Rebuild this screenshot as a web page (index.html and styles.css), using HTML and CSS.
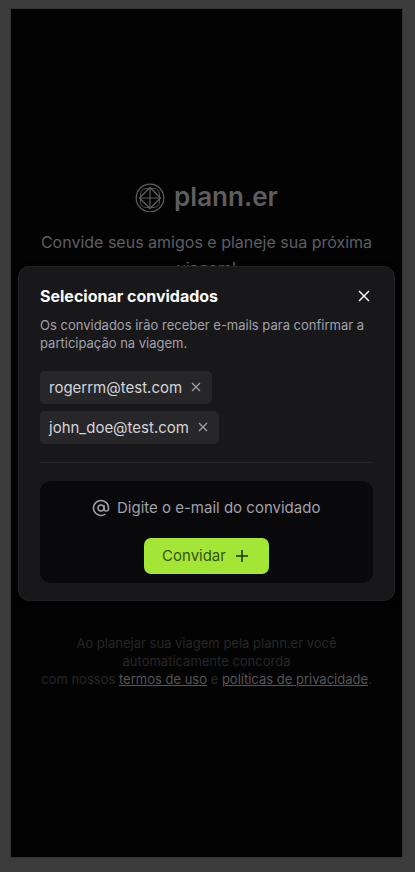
FILE: index.html
```html
<!DOCTYPE html>
<html lang="pt-BR">
<head>
<meta charset="utf-8">
<meta name="viewport" content="width=device-width, initial-scale=1">
<title>plann.er</title>
<link rel="stylesheet" href="styles.css">
</head>
<body>
<div class="screen">
  <main class="home">
    <header class="hero">
      <h1 class="brand">
        <svg class="brand-mark" viewBox="0 0 30 30" fill="none" stroke="currentColor" aria-hidden="true">
          <circle cx="15" cy="16" r="13.800" stroke-width="1.2"/>
          <path d="M15 5.500 25.500 16 15 26.500 4.500 16Z" stroke-width="1.4"/>
          <path d="M15 5.500v21M4.500 16h21" stroke-width="1.2"/>
          <rect x="5.500" y="6.500" width="19" height="19" rx="5.500" stroke-width=".8"/>
        </svg>
        <span>plann.er</span>
      </h1>
      <p class="tagline">Convide seus amigos e planeje sua próxima viagem!</p>
    </header>
    <p class="terms">Ao planejar sua viagem pela plann.er você automaticamente concorda<br>com nossos <a href="#">termos de uso</a> e <a href="#">políticas de privacidade</a>.</p>
  </main>

  <div class="overlay">
    <section class="dialog" role="dialog" aria-labelledby="dialog-title">
      <div class="dialog-head">
        <h2 id="dialog-title">Selecionar convidados</h2>
        <button class="icon-button close" type="button" aria-label="Fechar">
          <svg viewBox="0 0 18 18" aria-hidden="true"><path d="M4 4l10 10M14 4L4 14"/></svg>
        </button>
      </div>
      <p class="description">Os convidados irão receber e-mails para confirmar a participação na viagem.</p>
      <ul class="guests">
        <li class="guest"><span>rogerrm@test.com</span>
          <button class="icon-button" type="button" aria-label="Remover">
            <svg viewBox="0 0 14 14" aria-hidden="true"><path d="M3 3l8 8M11 3l-8 8"/></svg>
          </button></li>
        <li class="guest"><span>john_doe@test.com</span>
          <button class="icon-button" type="button" aria-label="Remover">
            <svg viewBox="0 0 14 14" aria-hidden="true"><path d="M3 3l8 8M11 3l-8 8"/></svg>
          </button></li>
      </ul>
      <form class="invite">
        <div class="field">
          <svg viewBox="0 0 24 24" aria-hidden="true"><circle cx="12" cy="12" r="4"/><path d="M16 8v5a3 3 0 0 0 6 0v-1a10 10 0 1 0-4 8"/></svg>
          <input type="email" placeholder="Digite o e-mail do convidado" aria-label="E-mail do convidado">
        </div>
        <button class="submit" type="submit">Convidar
          <svg viewBox="0 0 24 24" aria-hidden="true"><path d="M4 12h16M12 4v16"/></svg>
        </button>
      </form>
    </section>
  </div>
</div>
</body>
</html>
```
FILE: styles.css
```css
* {
  box-sizing: border-box;
  margin: 0;
}

body {
  background: #3c3c3c;
  font-family: Inter, "Liberation Sans", sans-serif;
  color: #fafafa;
}

button,
input {
  border: 0;
  padding: 0;
  background: none;
  font: inherit;
  color: inherit;
}

svg {
  flex: none;
}

.screen {
  position: relative;
  min-height: calc(100vh - 24px);
  margin: 9px 13px 15px 11px;
  display: grid;
  background-color: #030303;
  outline: 1px solid #323232;
}

.home {
  display: grid;
  align-content: space-between;
  padding: 170px 24px 169px;
  text-align: center;
}

.brand {
  display: flex;
  align-items: center;
  justify-content: center;
  gap: 9px;
  font-size: 26px;
  line-height: 36px;
  font-weight: 600;
  color: #5e5e60;
}

.brand-mark {
  width: 30px;
  height: 30px;
}

.tagline {
  margin-top: 14px;
  font-size: 16px;
  line-height: 26px;
  color: #5e5e62;
}

.terms {
  font-size: 13px;
  line-height: 18px;
  color: #262629;
}

.terms a {
  color: #56565a;
}

.overlay {
  position: absolute;
  inset: 0;
  display: grid;
  align-items: center;
  padding: 0 7px;
}

.dialog {
  padding: 17px 21px;
  border: 1px solid #222224;
  border-radius: 11px;
  background: #18181a;
  box-shadow: 0 2px 6px rgba(0, 0, 0, 0.4);
}

.dialog-head {
  display: flex;
  align-items: center;
  justify-content: space-between;
}

h2 {
  font-size: 16px;
  line-height: 25px;
  font-weight: 700;
}

.icon-button {
  display: grid;
}

.icon-button svg {
  width: 14px;
  height: 14px;
  fill: none;
  stroke: #a1a1aa;
  stroke-width: 1.2;
}

.close svg {
  width: 18px;
  height: 18px;
  stroke: #fafafa;
  stroke-width: 1.5;
}

.description {
  margin-top: 7px;
  font-size: 13px;
  line-height: 18px;
  color: #a1a1aa;
}

.guests {
  display: flex;
  flex-direction: column;
  align-items: flex-start;
  gap: 7px;
  margin-top: 19px;
  padding: 0 0 18px;
  border-bottom: 1px solid #27272a;
  list-style: none;
}

.guest {
  display: flex;
  align-items: center;
  gap: 7px;
  height: 33px;
  padding: 0 9px;
  border-radius: 5px;
  background: #27272a;
  color: #d4d4d8;
  font-size: 15px;
}

.invite {
  display: flex;
  flex-direction: column;
  align-items: center;
  margin-top: 18px;
  padding: 9px;
  border-radius: 11px;
  background: #09090b;
  font-size: 15px;
}

.field {
  display: flex;
  align-items: center;
  gap: 7px;
  height: 36px;
  color: #a1a1aa;
}

.field svg {
  width: 18px;
  height: 18px;
  fill: none;
  stroke: currentColor;
  stroke-width: 2;
}

.field input {
  width: 204px;
  outline: 0;
}

.field input::placeholder {
  color: #a1a1aa;
  opacity: 1;
}

.submit {
  display: flex;
  align-items: center;
  gap: 7px;
  height: 36px;
  margin-top: 12px;
  padding: 0 18px;
  border-radius: 7px;
  background: #a3e635;
  color: #365314;
}

.submit svg {
  width: 18px;
  height: 18px;
  fill: none;
  stroke: #1a2e05;
  stroke-width: 2;
}
```
